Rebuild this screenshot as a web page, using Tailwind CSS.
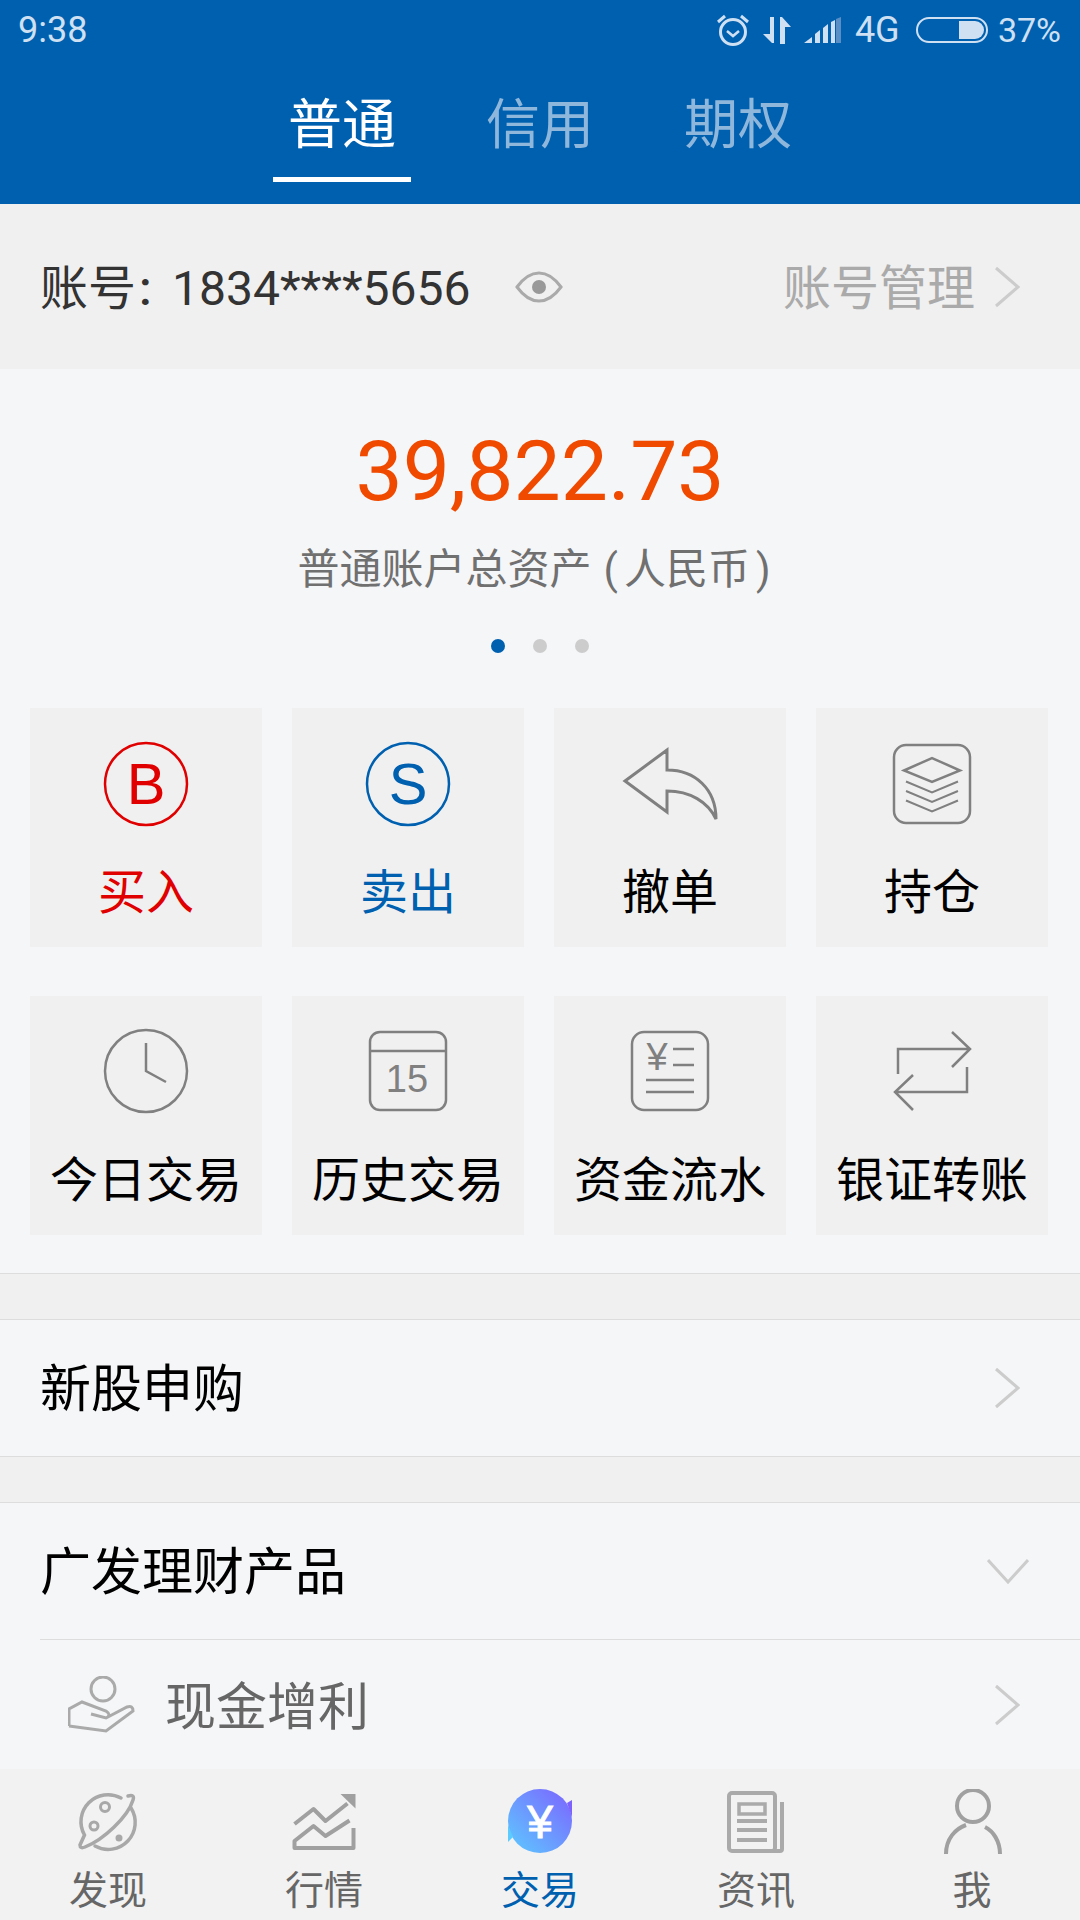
<!DOCTYPE html>
<html lang="zh-CN">
<head>
  <meta charset="UTF-8">
  <meta name="viewport" content="width=device-width, initial-scale=1.0">
  <title>交易</title>
  <script src="https://cdn.jsdelivr.net/npm/@tailwindcss/browser@4"></script>
</head>
<body class="font-['Roboto','Noto_Sans_CJK_SC',sans-serif]">
<div class="w-[1080px] h-[1920px] flex flex-col overflow-hidden bg-[#f5f6f8]">

  <!-- header -->
  <header class="h-[204px] shrink-0 bg-[#0060b0] text-[#cfe0f2]">
    <div class="h-[60px] flex items-center pl-[18px] pr-[19px] text-[34px]">
      <span class="text-[36px]">9:38</span>
      <div class="ml-auto flex items-center">
        <svg class="w-[34px] h-[34px]" viewBox="0 0 34 34" fill="none" stroke="#cfe0f2" stroke-width="3"><circle cx="17" cy="19" r="12.5"/><path d="M11 18l6 5 6-5" stroke-width="2.5"/><path d="M2 9l7-6M32 9l-7-6"/></svg>
        <svg class="ml-[13px] w-[28px] h-[27px]" viewBox="0 0 28 27" fill="#cfe0f2"><path d="M7 0h4v26h-2L0 17h7zM17 0h2l9 10h-6v17h-5z"/></svg>
        <svg class="ml-[13px] w-[37px] h-[26px]" viewBox="0 0 37 26"><path fill="#cfe0f2" d="M0 26l8-6v6zM11 17l5-4v13h-5zM19 11l5-4v19h-5zM27 5l4-2v23h-4z"/><path fill="#5a8fc6" d="M32 2l5-2v26h-5z"/></svg>
        <span class="ml-[14px] w-[48px] text-[36px]">4G</span>
        <div class="ml-[13px] w-[72px] h-[26px] rounded-full border-[2px] border-[#cfe0f2] flex justify-end p-[2px]">
          <div class="w-[25px] h-full bg-[#cfe0f2] rounded-r-full"></div>
        </div>
        <span class="ml-[10px]">37%</span>
      </div>
    </div>
    <nav class="flex justify-center text-[54px] leading-[64px]">
      <div class="w-[198px] flex flex-col items-center pt-[34px] text-white">普通<div class="w-[138px] h-[5px] mt-[19px] bg-white"></div></div>
      <div class="w-[198px] flex flex-col items-center pt-[34px] text-[#8fb7dc]">信用</div>
      <div class="w-[198px] flex flex-col items-center pt-[34px] text-[#8fb7dc]">期权</div>
    </nav>
  </header>

  <!-- account -->
  <section class="h-[165px] shrink-0 bg-[#f0f0f0] flex items-center pl-[40px] pr-[60px] text-[48px]">
    <span class="flex pt-[4px] text-[#333333] w-[475px] whitespace-nowrap">账号<span class="w-[36px] pl-[3px] font-medium">:</span>1834****5656</span>
    <svg class="w-[48px] h-[32px]" viewBox="0 0 48 32" fill="none" stroke="#aaaaaa" stroke-width="3"><path d="M2 16C10 5 17 2 24 2s14 3 22 14c-8 11-15 14-22 14S10 27 2 16z"/><circle cx="24" cy="16" r="7" fill="#999999" stroke="none"/></svg>
    <span class="ml-auto pt-[4px] text-[#aaaaaa]">账号管理</span>
    <svg class="ml-[20px] w-[25px] h-[42px]" viewBox="0 0 25 42" fill="none" stroke="#cccccc" stroke-width="3"><path d="M1 2l22 19L1 40"/></svg>
  </section>

  <!-- total assets -->
  <section class="flex-1 min-h-0 flex flex-col">
    <div class="mt-[53px] text-center text-[84px] leading-[100px] text-[#f04a00]">39,822.73</div>
    <div class="mt-[20px] pr-[12px] flex justify-center text-[42px] leading-[56px] text-[#707070]">普通账户总资产<span class="ml-[12px]">(</span><span class="mx-[6px]">人民币</span>)</div>
    <div class="mt-[41px] flex justify-center gap-[28px]">
      <div class="w-[14px] h-[14px] rounded-full bg-[#0060b0]"></div>
      <div class="w-[14px] h-[14px] rounded-full bg-[#cccccc]"></div>
      <div class="w-[14px] h-[14px] rounded-full bg-[#cccccc]"></div>
    </div>

    <!-- actions -->
    <div class="mt-[55px] pl-[30px] pr-[32px] grid grid-cols-4 gap-x-[30px] gap-y-[49px] text-[48px] text-black">
      <div class="h-[239px] bg-[#f0f0f0] flex flex-col items-center pt-[26px]">
        <svg class="w-[100px] h-[100px]" viewBox="0 0 100 100"><circle cx="50" cy="50" r="41" fill="none" stroke="#e00000" stroke-width="2.5"/><text x="50" y="70" text-anchor="middle" font-family="Liberation Sans" font-size="58" fill="#e00000">B</text></svg>
        <span class="mt-[29px] leading-[60px] text-[#e00000]">买入</span>
      </div>
      <div class="h-[239px] bg-[#f0f0f0] flex flex-col items-center pt-[26px]">
        <svg class="w-[100px] h-[100px]" viewBox="0 0 100 100"><circle cx="50" cy="50" r="41" fill="none" stroke="#0060b0" stroke-width="2.5"/><text x="50" y="70" text-anchor="middle" font-family="Liberation Sans" font-size="58" fill="#0060b0">S</text></svg>
        <span class="mt-[29px] leading-[60px] text-[#0060b0]">卖出</span>
      </div>
      <div class="h-[239px] bg-[#f0f0f0] flex flex-col items-center pt-[26px]">
        <svg class="w-[100px] h-[100px]" viewBox="0 0 100 100" fill="none" stroke="#808080" stroke-width="3"><path d="M5 47L47 16V36C75 36 96 55 96 85C88 68 70 57 47 57V78Z"/></svg>
        <span class="mt-[29px] leading-[60px]">撤单</span>
      </div>
      <div class="h-[239px] bg-[#f0f0f0] flex flex-col items-center pt-[26px]">
        <svg class="w-[100px] h-[100px]" viewBox="0 0 100 100" fill="none" stroke="#808080" stroke-width="2.5"><rect x="12" y="11" width="76" height="78" rx="12"/><path d="M22 36.5L50 24l28 12.500L50 48z"/><path d="M24 47.500L50 58.500 76 47.500M24 57L50 68 76 57M24 66.500L50 77.500 76 66.500" stroke-width="2"/></svg>
        <span class="mt-[29px] leading-[60px]">持仓</span>
      </div>
      <div class="h-[239px] bg-[#f0f0f0] flex flex-col items-center pt-[25px]">
        <svg class="w-[100px] h-[100px]" viewBox="0 0 100 100" fill="none" stroke="#808080" stroke-width="2.5"><circle cx="50" cy="50" r="41"/><path d="M50 22V50L70 61"/></svg>
        <span class="mt-[30px] leading-[60px]">今日交易</span>
      </div>
      <div class="h-[239px] bg-[#f0f0f0] flex flex-col items-center pt-[25px]">
        <svg class="w-[100px] h-[100px]" viewBox="0 0 100 100" fill="none" stroke="#808080" stroke-width="2.500"><rect x="12" y="11" width="76" height="78" rx="10"/><path d="M12 30H88"/><text x="49" y="71" text-anchor="middle" font-family="Liberation Sans" font-size="38" fill="#808080" stroke="none">15</text></svg>
        <span class="mt-[30px] leading-[60px]">历史交易</span>
      </div>
      <div class="h-[239px] bg-[#f0f0f0] flex flex-col items-center pt-[25px]">
        <svg class="w-[100px] h-[100px]" viewBox="0 0 100 100" fill="none" stroke="#808080" stroke-width="2.5"><rect x="12" y="11" width="76" height="78" rx="12"/><text x="37" y="49" text-anchor="middle" font-family="Liberation Sans" font-size="38" fill="#808080" stroke="none">¥</text><path d="M53 28H74M53 44H74M26 59H74M26 71H74"/></svg>
        <span class="mt-[30px] leading-[60px]">资金流水</span>
      </div>
      <div class="h-[239px] bg-[#f0f0f0] flex flex-col items-center pt-[25px]">
        <svg class="w-[100px] h-[100px]" viewBox="0 0 100 100" fill="none" stroke="#808080" stroke-width="2.5"><path d="M16 53V28H87M70 11L88 28 70 46M85 46V71H14M31 54L13 71 31 89"/></svg>
        <span class="mt-[30px] leading-[60px]">银证转账</span>
      </div>
    </div>

    <div class="mt-[38px] h-[47px] shrink-0 bg-[#f0f0f0] border-y border-[#dddddd]"></div>

    <div class="h-[136px] shrink-0 flex items-center justify-between pl-[40px] pr-[60px] text-[51px] text-black">
      <span class="pt-[5px]">新股申购</span>
      <svg class="w-[25px] h-[42px]" viewBox="0 0 25 42" fill="none" stroke="#cccccc" stroke-width="3"><path d="M1 2l22 19L1 40"/></svg>
    </div>

    <div class="h-[47px] shrink-0 bg-[#f0f0f0] border-y border-[#dddddd]"></div>

    <div class="h-[136px] shrink-0 flex items-center justify-between pl-[40px] pr-[51px] text-[51px] text-black">
      <span class="pt-[4px]">广发理财产品</span>
      <svg class="w-[42px] h-[27px]" viewBox="0 0 42 27" fill="none" stroke="#cccccc" stroke-width="3"><path d="M1 2l20 22L41 2"/></svg>
    </div>
    <div class="h-px shrink-0 ml-[40px] bg-[#dddddd]"></div>
    <div class="flex-1 min-h-0 flex items-center pl-[68px] pr-[60px] text-[51px] text-[#666666]">
      <svg class="w-[67px] h-[57px]" viewBox="0 0 67 57" fill="none" stroke="#aaaaaa" stroke-width="3"><circle cx="35" cy="13" r="12"/><path d="M1 50V33L14 26L38 35Q44 39 38 42L23 38M38 42L59 31Q65 29 65 35L38 55L1 50"/></svg>
      <span class="ml-[30px] pt-[8px]">现金增利</span>
      <svg class="ml-auto w-[25px] h-[42px]" viewBox="0 0 25 42" fill="none" stroke="#cccccc" stroke-width="3"><path d="M1 2l22 19L1 40"/></svg>
    </div>
  </section>

  <!-- tab bar -->
  <footer class="h-[151px] shrink-0 bg-[#f2f2f2] grid grid-cols-5 text-[39px] leading-[44px] text-[#666666]">
    <div class="flex flex-col items-center pt-[20px]">
      <svg class="w-[66px] h-[66px]" viewBox="-3 -3 66 66" fill="none" stroke="#a8a8a8" stroke-width="3.5" stroke-linecap="round"><path d="M43 6A27 27 0 0 0 6.500 43L2 53Q2 57 7 55C25 48 50 25 55 8Q57 2 50 4"/><path d="M53 16A27 27 0 0 1 17 54"/><circle cx="27" cy="15" r="4.500" stroke-width="3"/><circle cx="16" cy="34" r="4" stroke-width="3"/><circle cx="41" cy="46" r="3.500" fill="#a8a8a8" stroke="none"/></svg>
      <span class="mt-[14px]">发现</span>
    </div>
    <div class="flex flex-col items-center pt-[20px]">
      <svg class="w-[66px] h-[66px]" viewBox="-1.500 -4 66 66" fill="none" stroke="#a0a0a0" stroke-width="4" stroke-linejoin="round"><path d="M2 31L21 16L33 28L55 10.500"/><path d="M48 1H63V15.500Z" fill="#a0a0a0" stroke="none"/><path d="M57 27.500L33 43L21 33L2 48V55H61V35"/></svg>
      <span class="mt-[14px]">行情</span>
    </div>
    <div class="flex flex-col items-center pt-[20px] text-[#0060b0]">
      <svg class="w-[66px] h-[66px]" viewBox="0 0 66 66"><defs><linearGradient id="trade" x1="1" y1="0" x2="0" y2="1"><stop offset="0" stop-color="#7d62ff"/><stop offset="1" stop-color="#5ccbff"/></linearGradient></defs><circle cx="33" cy="32" r="32" fill="url(#trade)"/><path fill="#7d62ff" d="M60 14L65 11V28Z"/><path fill="#5ccbff" d="M6 48L1 53V36Z"/><text x="33" y="49" text-anchor="middle" font-family="Liberation Sans" font-size="46" fill="#ffffff" stroke="#ffffff" stroke-width="1">¥</text></svg>
      <span class="mt-[14px]">交易</span>
    </div>
    <div class="flex flex-col items-center pt-[20px]">
      <svg class="w-[66px] h-[66px]" viewBox="-4 -2 66 66" fill="none" stroke="#aaaaaa" stroke-width="4"><rect x="2" y="2" width="46" height="58" rx="3"/><path d="M55 11V58Q55 60 53 60H44"/><rect x="12" y="13" width="26" height="10" stroke-width="3.500"/><path d="M10 30H40M10 39H40M10 49H40"/></svg>
      <span class="mt-[14px]">资讯</span>
    </div>
    <div class="flex flex-col items-center pt-[20px]">
      <svg class="w-[66px] h-[66px]" viewBox="-4 0 66 66" fill="none" stroke="#a0a0a0" stroke-width="4"><circle cx="30" cy="17" r="16"/><path d="M3 65C3 50 12 40 23 36M42 38C50 42 57 52 57 65"/></svg>
      <span class="mt-[14px]">我</span>
    </div>
  </footer>
</div>
</body>
</html>
